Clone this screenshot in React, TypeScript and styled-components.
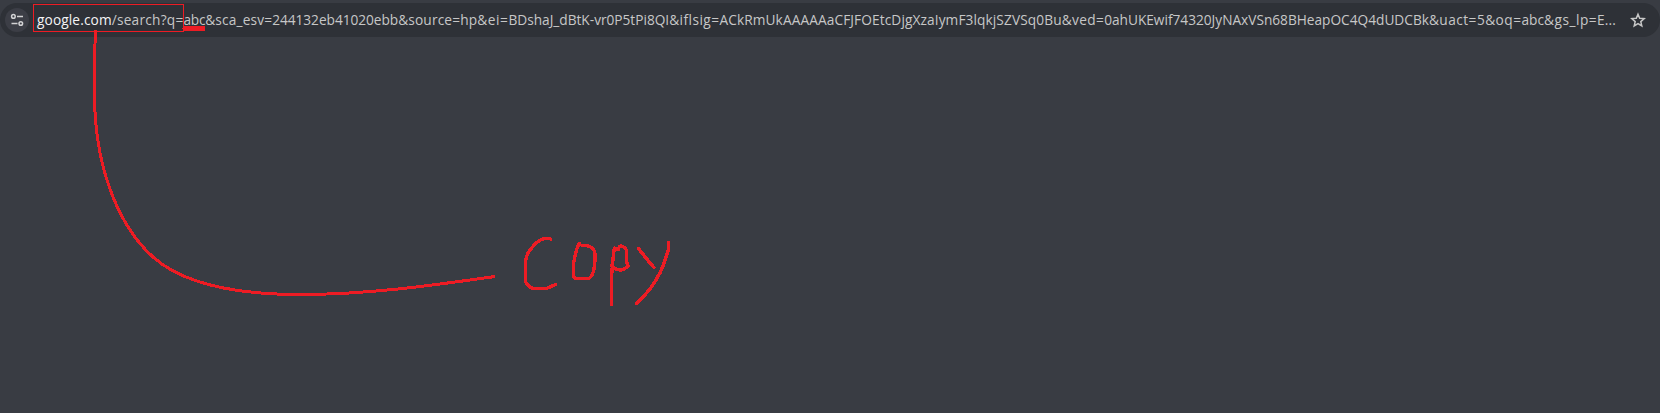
import React, { useLayoutEffect, useRef, useState } from "react";
import styled, { createGlobalStyle } from "styled-components";

const Global = createGlobalStyle`
  body { margin: 0; background: #393c43; }
`;

const Page = styled.main`
  position: relative;
  box-sizing: border-box;
  height: 413px;
  padding-top: 3px;
  background: #393c43;
  overflow: hidden;
`;

const AddressBar = styled.div`
  display: flex;
  align-items: center;
  height: 34px;
  padding: 0 14px 0 5px;
  border-radius: 17px;
  background: #2e3137;
`;

const SiteButton = styled.button`
  display: flex;
  flex: none;
  align-items: center;
  justify-content: center;
  width: 24px;
  height: 24px;
  padding: 0;
  border: 0;
  border-radius: 50%;
  background: #3c3e46;
`;

const Url = styled.div`
  display: flex;
  flex: 1;
  margin-left: 8px;
  font: 13.7px/20px "Open Sans", "Noto Sans", sans-serif;
  color: #c7c7c7;
  white-space: pre;
`;

const Part = styled.span<{ $width: number; $host?: boolean }>`
  flex: none;
  width: ${(p) => p.$width}px;
  color: ${(p) => (p.$host ? "#f4f4f5" : "inherit")};
`;

const StarButton = styled.button`
  display: flex;
  flex: none;
  padding: 0;
  border: 0;
  background: none;
`;

const Ink = styled.svg`
  position: absolute;
  inset: 0;
  fill: none;
  stroke: #ed1c24;
  stroke-width: 3;
  stroke-linecap: round;
  stroke-linejoin: round;
  shape-rendering: crispEdges;
  pointer-events: none;
`;

const Frame = styled.rect`
  stroke-width: 1;
  stroke-linejoin: miter;
`;

const Underline = styled.path`
  stroke-width: 5;
`;

const Connector = styled.path`
  stroke-linecap: butt;
`;

const Handwriting = styled.g`
  stroke-width: 3.4;
`;

type UrlPart = { text: string; width: number; host?: boolean };

const parts: UrlPart[] = [
  { text: "google.com", width: 74.7, host: true },
  { text: "/search?q=", width: 71.8 },
  { text: "abc", width: 21.7 },
  { text: "&sca_esv=", width: 67 },
  { text: "244132eb41020ebb", width: 126 },
  { text: "&source=", width: 62 },
  { text: "hp", width: 17.2 },
  { text: "&ei=", width: 31.1 },
  { text: "BDshaJ_dBtK-vr0P5tPi8QI", width: 160.7 },
  { text: "&iflsig=", width: 50.3 },
  { text: "ACkRmUkAAAAAaCFJFOEtcDjgXzaIymF3lqkjSZVSq0Bu", width: 342.2 },
  { text: "&ved=", width: 42.5 },
  { text: "0ahUKEwif74320JyNAxVSn68BHeapOC4Q4dUDCBk", width: 324.8 },
  { text: "&uact=5&oq=", width: 92.5 },
  { text: "abc", width: 22.7 },
  { text: "&gs_lp=", width: 53 },
  { text: "E...", width: 18.7 },
];

/** A piece of the URL whose letters are tracked to fill its width. */
function FittedPart({ text, width, host }: UrlPart) {
  const ref = useRef<HTMLSpanElement>(null);
  const [spacing, setSpacing] = useState(0);

  useLayoutEffect(() => {
    if (!ref.current) return;
    const natural = ref.current.getBoundingClientRect().width;
    setSpacing((width - natural) / text.length);
  }, [text, width]);

  return (
    <Part $width={width} $host={host}>
      <span ref={ref} style={{ letterSpacing: spacing }}>
        {text}
      </span>
    </Part>
  );
}

export default function App() {
  return (
    <Page>
      <Global />
      <AddressBar>
        <SiteButton aria-label="View site information">
          <svg width="14" height="14" viewBox="0 0 14 14" fill="none" stroke="#d2d2d4" strokeWidth="1.5">
            <circle cx="3.4" cy="3.4" r="1.8" />
            <path d="M7 3.5h6M1.5 10.5h6" />
            <circle cx="10.8" cy="10.5" r="1.8" />
          </svg>
        </SiteButton>
        <Url>
          {parts.map((part, i) => (
            <FittedPart key={i} {...part} />
          ))}
        </Url>
        <StarButton aria-label="Bookmark this tab">
          <svg width="16" height="16" viewBox="0 0 16 16" fill="none" stroke="#c7c7c7" strokeWidth="1.5">
            <path d="M8 2.2l1.7 4 4.5.4-3.4 3 1 4.4L8 11.7 4.2 14l1-4.4-3.4-3 4.5-.4z" />
          </svg>
        </StarButton>
      </AddressBar>
      <Ink width="1660" height="413" viewBox="0 0 1660 413">
        <Frame x="33.5" y="4.5" width="150" height="27" />
        <Underline d="M185 28.5H203" />
        <Connector d="M95.5 30C94.5 50 94.5 80 94.5 95C94.5 160 115 223 153 257C185 285.6 240 294.5 300 294.5C365 294.5 425 286.5 495 276.5" />
        <Handwriting>
          <path d="M550.7 239Q547 238 544 238.5Q540 240 536.7 242.5Q529 250 526.7 256Q525 261 525.3 266V280Q526 285 532.3 288.3H546.7Q550 287 555.5 284.5" />
          <path d="M579.3 243.5Q577 247 576 252L573.5 263V276Q574 278.5 576.7 278.7H588.3Q592 277 593.3 271.7Q595 266 595 260V253.5Q594 248 590 246.7Q586 245 582 245.5" />
          <path d="M611.5 304.5V276L612.7 262L614.3 248L618.3 249.5Q619 246 621 246Q626 247 626.7 252V262L628 266Q624 270 620 270Q616 270 611.5 265.7" />
          <path d="M638.5 248.5L650 263L654 267.5M668.7 242.5V249Q666 256 664 263.5Q661 272 655 281.7Q650 290 643.3 296.7L636.5 303.5" />
        </Handwriting>
      </Ink>
    </Page>
  );
}
